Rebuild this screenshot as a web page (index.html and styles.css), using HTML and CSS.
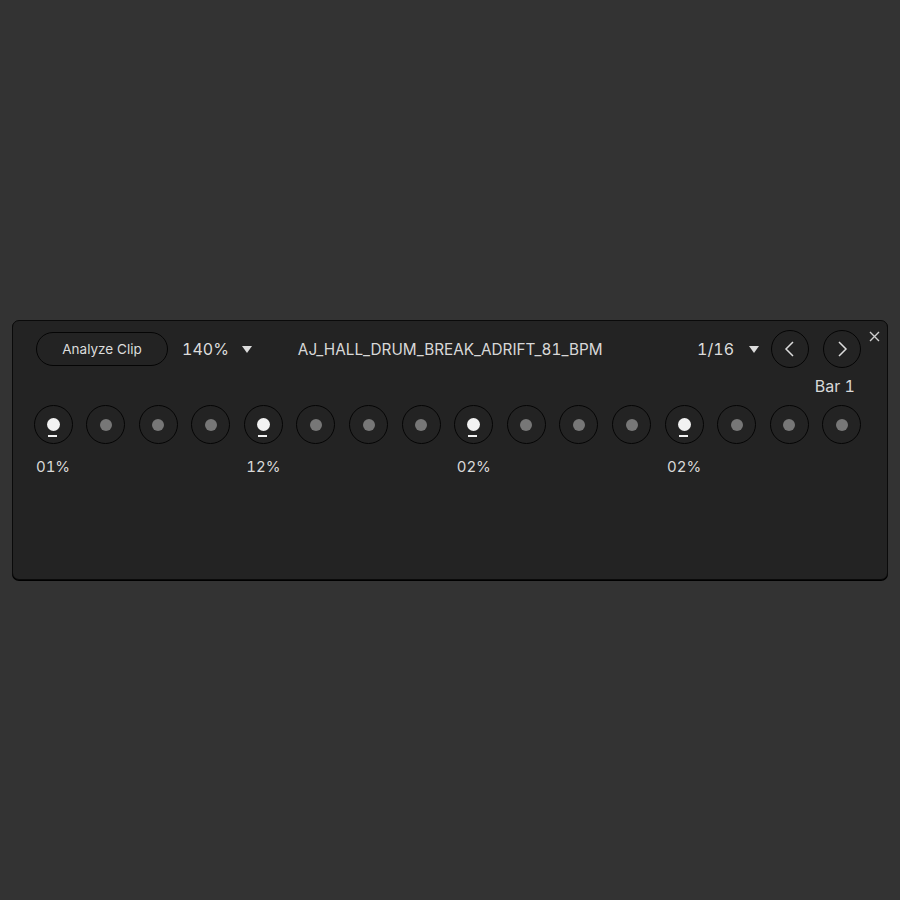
FILE: index.html
```html
<!DOCTYPE html>
<html lang="en">
<head>
  <meta charset="UTF-8">
  <meta name="viewport" content="width=device-width, initial-scale=1.0">
  <title>Groove Analyzer</title>
  <link rel="stylesheet" href="styles.css">
</head>
<body>
  <!-- Groove Panel -->
  <div class="panel">
    <button class="close" type="button" aria-label="Close">
      <svg width="11" height="11" viewBox="0 0 11 11"><path d="M1 1 L10 10 M10 1 L1 10" stroke="#cfcfcf" stroke-width="1.4" fill="none"/></svg>
    </button>

    <div class="toolbar">
      <button class="analyze" type="button">Analyze Clip</button>
      <div class="dropdown zoom">140% <span class="arrow"></span></div>
      <div class="clip-name">AJ_HALL_DRUM_BREAK_ADRIFT_81_BPM</div>
      <div class="dropdown grid">1/16 <span class="arrow"></span></div>
      <button class="nav" type="button" aria-label="Previous">
        <svg width="16" height="16" viewBox="0 0 16 16"><path d="M11 1 L4 8 L11 15" stroke="#dcdcdc" stroke-width="1.5" fill="none"/></svg>
      </button>
      <button class="nav" type="button" aria-label="Next">
        <svg width="16" height="16" viewBox="0 0 16 16"><path d="M5 1 L12 8 L5 15" stroke="#dcdcdc" stroke-width="1.5" fill="none"/></svg>
      </button>
    </div>

    <div class="bar-label">Bar 1</div>

    <div class="steps" id="steps">
      <!-- Steps are rendered below -->
    </div>
  </div>

  <script>
    // Step data: value shown only on accented steps
    const steps = [
      '01%', null, null, null, '12%', null, null, null,
      '02%', null, null, null, '02%', null, null, null
    ];

    const stepsContainer = document.getElementById('steps');

    steps.forEach(function (value) {
      const active = value !== null;
      const step = `
        <div class="step">
          <div class="knob ${active ? 'active' : ''}">
            <span class="dot"></span>
            ${active ? '<span class="line"></span>' : ''}
          </div>
          <div class="value">${active ? value : ''}</div>
        </div>
      `;
      stepsContainer.insertAdjacentHTML('beforeend', step);
    });
  </script>
</body>
</html>
```

FILE: styles.css
```css
/* Global Styles */
* {
  margin: 0;
  padding: 0;
  box-sizing: border-box;
}
body {
  font-family: 'Inter', 'Liberation Sans', sans-serif;
  font-variant-numeric: tabular-nums;
  background-color: #333333;
  color: #d8d8d8;
  display: flex;
  justify-content: center;
  align-items: center;
  height: 100vh;
}
button {
  font-family: inherit;
  background: none;
  color: inherit;
  cursor: pointer;
}

/* Panel */
.panel {
  position: relative;
  width: 876px;
  height: 260px;
  background-color: #232323;
  border: 1.5px solid #0a0a0a;
  border-radius: 7px;
  box-shadow: 0 1px 0 #000;
  padding: 9px 26px 0 21px;
}
.close {
  position: absolute;
  top: 10px;
  right: 7px;
  border: none;
  width: 11px;
  height: 11px;
  display: flex;
}

/* Toolbar */
.toolbar {
  display: flex;
  align-items: center;
  height: 38px;
}
.analyze {
  width: 132px;
  height: 34px;
  margin-left: 2px;
  border: 1.5px solid #050505;
  border-radius: 17px;
  font-size: 13.5px;
  color: #dcdcdc;
}
.dropdown {
  display: flex;
  align-items: center;
  font-size: 16px;
  color: #dcdcdc;
}
.arrow {
  width: 0;
  height: 0;
  border-left: 5px solid transparent;
  border-right: 5px solid transparent;
  border-top: 7px solid #dcdcdc;
}
.zoom {
  margin-left: 14px;
  gap: 13px;
}
.clip-name {
  margin-left: 46px;
  font-size: 15.3px;
  color: #d8d8d8;
  flex: 1;
}
.grid {
  gap: 15px;
  margin-right: 12px;
}
.nav {
  width: 38px;
  height: 38px;
  border: 1.8px solid #050505;
  border-radius: 50%;
  display: flex;
  align-items: center;
  justify-content: center;
}
.nav + .nav {
  margin-left: 14px;
}

/* Bar label */
.bar-label {
  text-align: right;
  font-size: 16px;
  line-height: 18px;
  margin-top: 9px;
  padding-right: 6px;
  color: #d8d8d8;
}

/* Steps */
.steps {
  display: flex;
  justify-content: space-between;
  margin-top: 10px;
}
.step {
  width: 38px;
  display: flex;
  flex-direction: column;
  align-items: center;
}
.knob {
  position: relative;
  width: 39px;
  height: 39px;
  flex-shrink: 0;
  border: 1.8px solid #050505;
  border-radius: 50%;
  display: flex;
  align-items: center;
  justify-content: center;
}
.dot {
  width: 12px;
  height: 12px;
  border-radius: 50%;
  background-color: #777777;
}
.knob.active .dot {
  width: 13px;
  height: 13px;
  background-color: #f2f2f2;
}
.line {
  position: absolute;
  left: 13px;
  top: 28.5px;
  width: 9px;
  height: 2px;
  background-color: #f2f2f2;
}
.value {
  margin-top: 14px;
  font-size: 15px;
  line-height: 18px;
  height: 18px;
  white-space: nowrap;
  color: #d8d8d8;
}
```
